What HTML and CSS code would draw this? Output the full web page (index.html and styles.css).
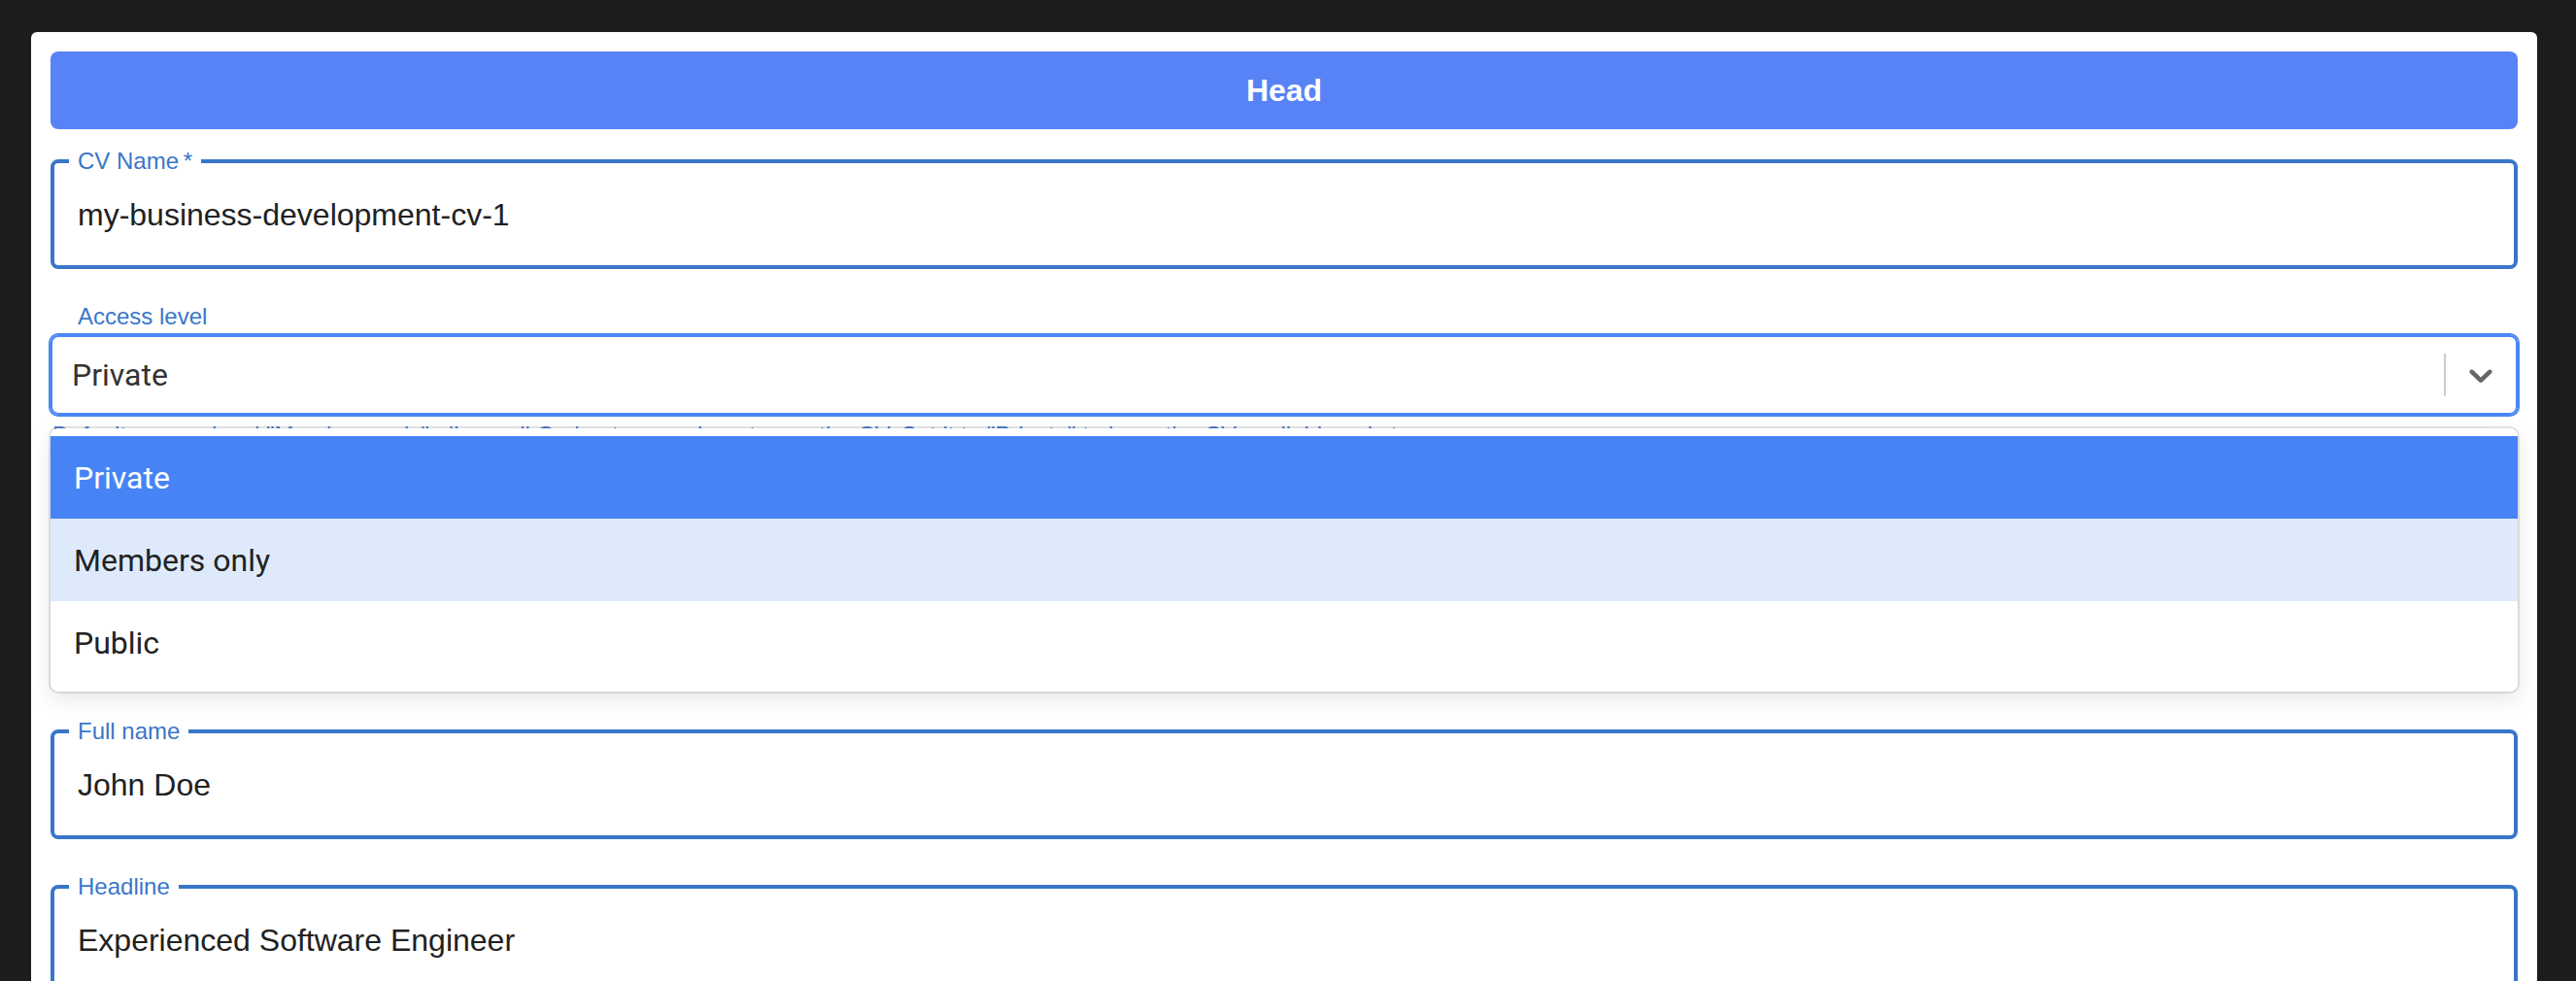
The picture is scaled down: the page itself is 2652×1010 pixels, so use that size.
FILE: index.html
```html
<!DOCTYPE html>
<html lang="en">
  <head>
    <meta charset="UTF-8" />
    <meta name="viewport" content="width=device-width, initial-scale=1.0" />
    <title>CV editor</title>
    <link rel="stylesheet" href="styles.css">
  </head>
  <body>
    <div class="card">
      <div class="section-head">Head</div>

      <form>
        <fieldset class="outlined">
          <legend>CV Name&thinsp;*</legend>
          <input type="text" name="name" value="my-business-development-cv-1" />
        </fieldset>

        <div class="select-field">
          <label class="select-label">Access level</label>
          <div class="select-wrapper">
            <div class="select-control">
              <div class="select-value">Private</div>
              <div class="select-indicators">
                <span class="select-separator"></span>
                <svg class="select-chevron" viewBox="0 0 20 20" width="40" height="40">
                  <path d="M4.516 7.548c0.436-0.446 1.043-0.481 1.576 0l3.908 3.747 3.908-3.747c0.533-0.481 1.141-0.446 1.574 0 0.436 0.445 0.408 1.197 0 1.615-0.406 0.418-4.695 4.502-4.695 4.502-0.217 0.223-0.502 0.335-0.787 0.335s-0.57-0.112-0.789-0.335c0 0-4.287-4.084-4.695-4.502s-0.436-1.17 0-1.615z"></path>
                </svg>
              </div>
            </div>
            <div class="helper">Default access level "Members only" allows all Orchestra members to see the CV. Set it to "Private" to keep the CV available only to you.</div>
            <div class="select-menu">
              <div class="option selected">Private</div>
              <div class="option focused">Members only</div>
              <div class="option">Public</div>
            </div>
          </div>
        </div>

        <fieldset class="outlined">
          <legend>Full name</legend>
          <input type="text" name="full_name" value="John Doe" />
        </fieldset>

        <fieldset class="outlined">
          <legend>Headline</legend>
          <input type="text" name="headline" value="Experienced Software Engineer" />
        </fieldset>
      </form>
    </div>
  </body>
</html>
```

FILE: styles.css
```css
html {
  overflow: hidden;
}

body {
  margin: 0;
  padding: 33px 40px 0 32px;
  background: #1c1c1e;
  font-family: "Liberation Sans", Arial, sans-serif;
}

.card {
  background: #ffffff;
  border-radius: 6px 6px 0 0;
  padding: 20px 20px 40px;
  min-height: 1000px;
}

.section-head {
  display: flex;
  justify-content: center;
  align-items: center;
  height: 80px;
  border-radius: 8px;
  background: #5883f6;
  color: #ffffff;
  font-size: 32px;
  font-weight: bold;
}

form {
  display: flex;
  flex-direction: column;
}

.outlined {
  margin: 35px 0 0;
  padding: 0 24px 32px;
  border: 4px solid #3a76c8;
  border-radius: 8px;
  min-width: 0;
}

form > .outlined:first-child {
  margin-top: 19px;
}

.outlined legend {
  margin-left: -9px;
  padding: 0 9px;
  color: #3a76c8;
  font-size: 24px;
  line-height: 28px;
}

.outlined input {
  display: block;
  width: 100%;
  box-sizing: border-box;
  margin-top: 21px;
  padding: 0;
  height: 40px;
  border: none;
  outline: none;
  font-family: "Liberation Sans", Arial, sans-serif;
  font-size: 32px;
  line-height: 40px;
  color: #212121;
  background: transparent;
}

.select-field {
  margin-top: 35px;
  padding-bottom: 242px;
}

.select-label {
  display: block;
  margin-left: 28px;
  color: #3a76c8;
  font-size: 24px;
  line-height: 28px;
}

.select-wrapper {
  position: relative;
  margin-top: 5px;
}

.select-control {
  display: flex;
  align-items: center;
  height: 78px;
  border: 2px solid #4a86f5;
  box-shadow: 0 0 0 2px #4a86f5;
  border-radius: 8px;
  font-family: Roboto, "Liberation Sans", sans-serif;
}

.select-value {
  flex: 1;
  padding-left: 20px;
  font-size: 32px;
  color: #333333;
}

.select-indicators {
  display: flex;
  align-items: center;
  height: 100%;
}

.select-separator {
  width: 2px;
  height: 44px;
  background: #cccccc;
}

.select-chevron {
  padding: 0 16px;
  fill: #666666;
}

.helper {
  margin-top: 7px;
  padding-left: 2px;
  color: #4a7fd6;
  font-size: 24px;
  line-height: 28px;
  white-space: nowrap;
}

/* dropdown menu lies over the helper text */
.select-menu {
  position: absolute;
  top: 96px;
  left: 0;
  right: 0;
  padding: 8px 0;
  background: #ffffff;
  border-radius: 8px;
  box-shadow: 0 0 0 2px rgba(0, 0, 0, 0.1), 0 8px 22px rgba(0, 0, 0, 0.1);
  font-family: Roboto, "Liberation Sans", sans-serif;
  font-size: 32px;
  color: #222222;
}

.option {
  display: flex;
  align-items: center;
  height: 85px;
  padding: 0 24px;
}

.option.selected {
  background: #4684f6;
  color: #ffffff;
}

.option.focused {
  background: #deeafc;
}
```
